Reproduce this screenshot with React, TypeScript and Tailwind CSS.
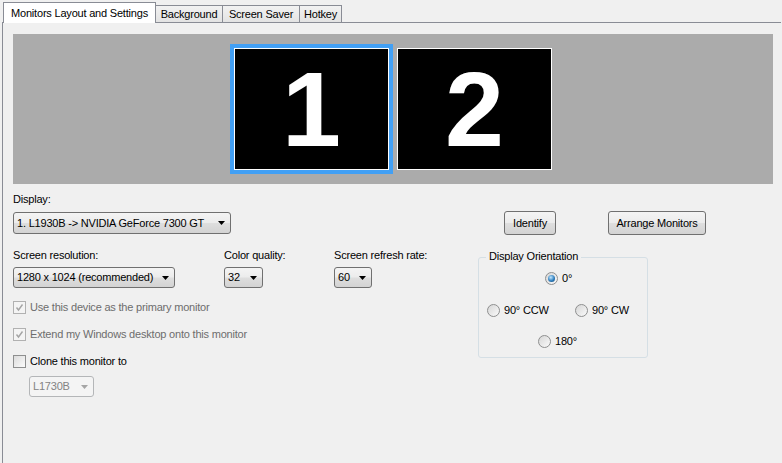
import React from "react";

const glossy =
  "bg-[linear-gradient(#f4f4f4,#ececec_48%,#dedede_52%,#d3d3d3)]";

function Arrow({ disabled }: { disabled?: boolean }) {
  return (
    <svg width="7" height="4" viewBox="0 0 7 4" className="shrink-0">
      <polygon points="0,0 7,0 3.5,4" fill={disabled ? "#a5a5a5" : "#000"} />
    </svg>
  );
}

function Combo({
  text,
  w,
  h = "h-[21px]",
  disabled,
}: {
  text: string;
  w: string;
  h?: string;
  disabled?: boolean;
}) {
  return (
    <div
      className={`${w} ${h} flex items-center justify-between rounded-[3px] border pl-[3px] pr-[5px] ${
        disabled
          ? "border-[#b4b6b8] bg-[#f4f4f4] text-[#838383]"
          : `border-[#707070] ${glossy}`
      }`}
    >
      <span className="whitespace-nowrap">{text}</span>
      <Arrow disabled={disabled} />
    </div>
  );
}

function Button({ label, w }: { label: string; w: string }) {
  return (
    <div
      className={`${w} flex h-[24px] items-center justify-center rounded-[3px] border border-[#707070] ${glossy}`}
    >
      {label}
    </div>
  );
}

function Check({
  label,
  checked,
  disabled,
}: {
  label: string;
  checked?: boolean;
  disabled?: boolean;
}) {
  return (
    <div className="flex h-[13px] items-center gap-[4px]">
      <div
        className={`flex h-[13px] w-[13px] items-center justify-center border ${
          disabled
            ? "border-[#b1b1b1] bg-[#f4f4f4]"
            : "border-[#8e8f8f] bg-[linear-gradient(135deg,#dcdcdc,#fbfbfb)]"
        }`}
      >
        {checked && (
          <svg width="9" height="9" viewBox="0 0 9 9">
            <polyline
              points="1.5,4.5 3.5,7 7.5,1.5"
              fill="none"
              stroke="#a4a4a4"
              strokeWidth="1.4"
            />
          </svg>
        )}
      </div>
      <span className={disabled ? "text-[#6d6d6d]" : ""}>{label}</span>
    </div>
  );
}

function Radio({ label, checked }: { label: string; checked?: boolean }) {
  return (
    <div className="flex h-[13px] items-center gap-[4px]">
      <div className="flex h-[13px] w-[13px] items-center justify-center rounded-full border border-[#8e8f8f] bg-[linear-gradient(135deg,#d6d6d6,#fafafa)]">
        {checked && (
          <div className="h-[7px] w-[7px] rounded-full bg-[radial-gradient(circle_at_40%_35%,#c4e8ff,#2f7fbf_55%,#0e3f68)]" />
        )}
      </div>
      <span>{label}</span>
    </div>
  );
}

function Monitor({ n }: { n: string }) {
  return (
    <div className="flex h-[122px] w-[155px] items-center justify-center border border-white bg-black font-bold text-[106px] leading-none tracking-normal text-white">
      {n}
    </div>
  );
}

export default function App() {
  return (
    <div className="h-[463px] w-[782px] overflow-hidden bg-[#f0f0f0] font-['Liberation_Sans',Arial,sans-serif] text-[11px] leading-[13px] tracking-[-0.2px] text-black">
      <div className="flex h-[22px] items-end pl-[3px]">
        <div className="relative z-10 -mb-px flex h-[21px] w-[153px] items-start justify-center border border-b-0 border-[#898c95] bg-white pt-[4px]">
          Monitors Layout and Settings
        </div>
        {[
          ["Background", "w-[68px]"],
          ["Screen Saver", "w-[78px]"],
          ["Hotkey", "w-[43px]"],
        ].map(([t, w]) => (
          <div
            key={t}
            className={`${w} -ml-px flex h-[17px] items-center justify-center border border-b-0 border-[#898c95] bg-[linear-gradient(#f2f2f2,#e3e3e3)] pt-[1px]`}
          >
            {t}
          </div>
        ))}
      </div>

      <div className="ml-[2px] h-[441px] w-[779px] border-l border-t border-[#898c95] bg-[#f0f0f0] pl-[10px] pt-[11px]">
        <div className="flex h-[150px] w-[760px] items-start bg-[#ababab] pl-[217px] pt-[10px]">
          <div className="border-[4px] border-[#42a0f5]">
            <Monitor n="1" />
          </div>
          <div className="ml-[4px] mt-[4px]">
            <Monitor n="2" />
          </div>
        </div>

        <div className="mt-[9px]">Display:</div>
        <div className="mt-[5px] flex h-[24px] items-center">
          <Combo
            text="1. L1930B -> NVIDIA GeForce 7300 GT"
            w="w-[218px]"
            h="h-[22px]"
          />
          <div className="ml-[273px]">
            <Button label="Identify" w="w-[52px]" />
          </div>
          <div className="ml-[52px]">
            <Button label="Arrange Monitors" w="w-[98px]" />
          </div>
        </div>

        <div className="mt-[14px] flex">
          <div className="w-[465px]">
            <div className="flex">
              <div className="w-[211px]">
                <div>Screen resolution:</div>
                <div className="mt-[5px]">
                  <Combo text="1280 x 1024 (recommended)" w="w-[162px]" />
                </div>
              </div>
              <div className="w-[110px]">
                <div>Color quality:</div>
                <div className="mt-[5px]">
                  <Combo text="32" w="w-[39px]" />
                </div>
              </div>
              <div>
                <div>Screen refresh rate:</div>
                <div className="mt-[5px]">
                  <Combo text="60" w="w-[38px]" />
                </div>
              </div>
            </div>

            <div className="mt-[13px] flex flex-col gap-[14px]">
              <Check
                label="Use this device as the primary monitor"
                checked
                disabled
              />
              <Check
                label="Extend my Windows desktop onto this monitor"
                checked
                disabled
              />
              <Check label="Clone this monitor to" />
            </div>
            <div className="ml-[16px] mt-[8px]">
              <Combo text="L1730B" w="w-[65px]" disabled />
            </div>
          </div>

          <div className="pt-[8px]">
            <div className="relative h-[101px] w-[170px] rounded-[3px] border border-[#d5dfe5]">
              <span className="absolute -top-[8px] left-[7px] bg-[#f0f0f0] px-[3px]">
                Display Orientation
              </span>
              <div className="pl-[66px] pt-[14px]">
                <Radio label="0°" checked />
              </div>
              <div className="mt-[19px] flex pl-[8px]">
                <div className="w-[88px]">
                  <Radio label="90° CCW" />
                </div>
                <Radio label="90° CW" />
              </div>
              <div className="mt-[18px] pl-[59px]">
                <Radio label="180°" />
              </div>
            </div>
          </div>
        </div>
      </div>
    </div>
  );
}
